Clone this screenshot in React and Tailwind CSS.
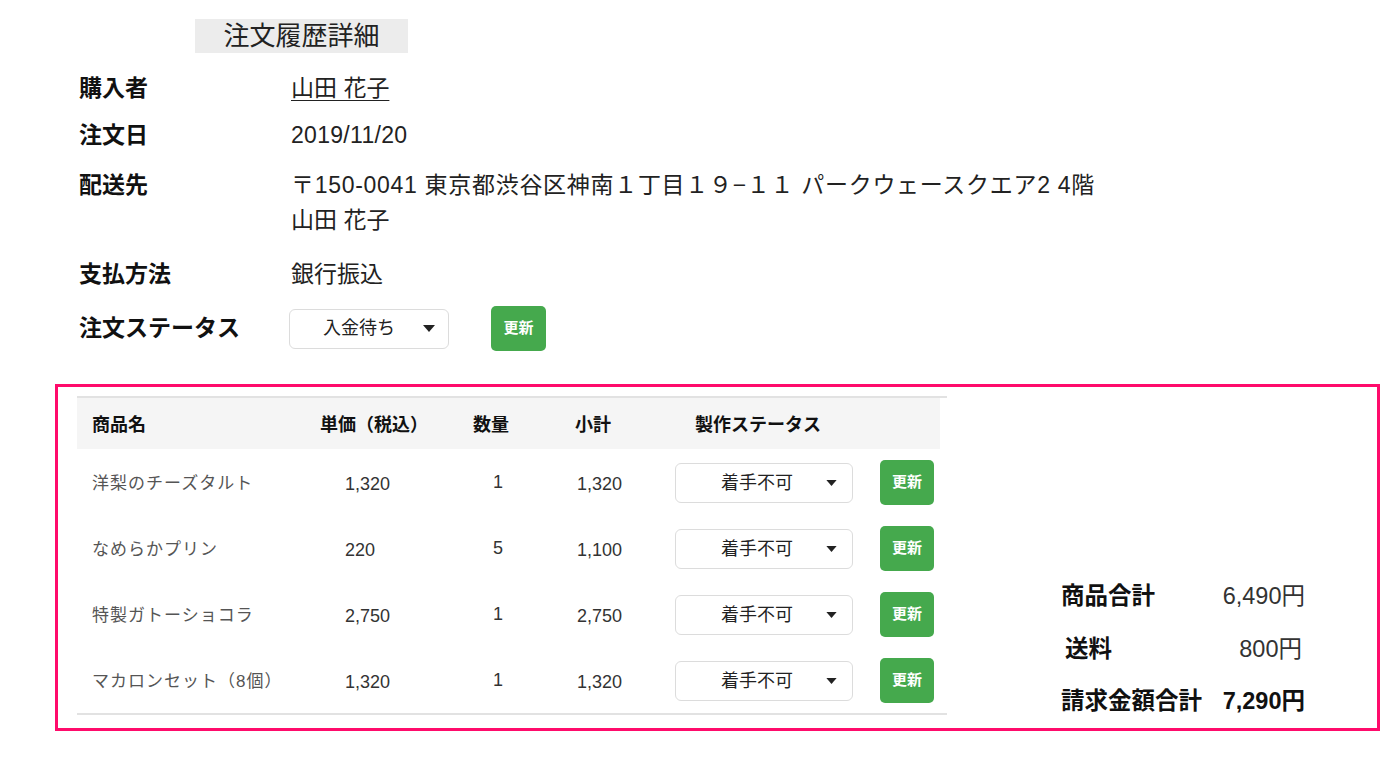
import React from 'react';

const items = [
  { name: '洋梨のチーズタルト', price: '1,320', qty: '1', subtotal: '1,320' },
  { name: 'なめらかプリン', price: '220', qty: '5', subtotal: '1,100' },
  { name: '特製ガトーショコラ', price: '2,750', qty: '1', subtotal: '2,750' },
  { name: 'マカロンセット（8個）', price: '1,320', qty: '1', subtotal: '1,320' },
];

const Caret = ({ className }) => (
  <svg viewBox="0 0 12 7" className={className} fill="#222">
    <path d="M0 0h12L6 7z" />
  </svg>
);

const UpdateButton = ({ className }) => (
  <button className={`flex items-center justify-center rounded-[5px] bg-[#45a94d] text-white font-bold ${className}`}>
    更新
  </button>
);

const StatusSelect = ({ label, className, textClass, caretClass }) => (
  <div className={`flex items-center justify-between rounded-[6px] border border-[#dcdcdc] bg-white ${className}`}>
    <span className={textClass}>{label}</span>
    <Caret className={caretClass} />
  </div>
);

const InfoRow = ({ label, children, className = '' }) => (
  <div className={`flex ${className}`}>
    <div className="w-[212px] shrink-0 font-bold text-[#111] leading-[35px]">{label}</div>
    <div className="leading-[35px] text-[#222]">{children}</div>
  </div>
);

const App = () => {
  return (
    <div
      className="min-h-screen w-[1400px] bg-white pt-[19px] text-[23px]"
      style={{ fontFamily: '"Liberation Sans", "Noto Sans CJK JP", sans-serif' }}
    >
      <div className="ml-[195px] h-[34px] w-[213px] bg-[#ececec] text-center text-[26px] leading-[34px] text-[#222]">
        注文履歴詳細
      </div>

      <div className="ml-[79px] flex flex-col">
        <InfoRow label="購入者" className="mt-[18px]">
          <span className="underline underline-offset-[4px] decoration-1">山田 花子</span>
        </InfoRow>
        <InfoRow label="注文日" className="mt-[12px]">
          <span className="tracking-[0.3px]">2019/11/20</span>
        </InfoRow>
        <InfoRow label="配送先" className="mt-[15px]">
          <div className="tracking-[0.7px]">〒150-0041 東京都渋谷区神南１丁目１９−１１ パークウェースクエア2 4階</div>
          <div>山田 花子</div>
        </InfoRow>
        <InfoRow label="支払方法" className="mt-[19px]">銀行振込</InfoRow>
        <div className="mt-[14px] flex h-[45px] items-center">
          <div className="w-[210px] shrink-0 font-bold text-[#111]">注文ステータス</div>
          <StatusSelect
            label="入金待ち"
            className="h-[40px] w-[160px] pl-[33px] pr-[13px]"
            textClass="text-[18px] text-[#222]"
            caretClass="w-[12px] h-[7px]"
          />
          <UpdateButton className="ml-[42px] h-[45px] w-[55px] text-[15px]" />
        </div>
      </div>

      <div className="ml-[55px] mr-[20px] mt-[33px] flex border-[3px] border-[#ff0b6b] pl-[19px] pt-[9px]">
        <div className="mb-[13px] w-[870px] border-b-2 border-t-2 border-[#e2e2e2]">
          <div className="mr-[7px] flex h-[51px] items-center bg-[#f5f5f5] pt-[3px] text-[18px] font-bold text-[#111]">
            <div className="w-[243px] pl-[15px]">商品名</div>
            <div className="w-[153px]">単価（税込）</div>
            <div className="w-[102px]">数量</div>
            <div className="w-[100px]">小計</div>
            <div className="w-[205px] pl-[20px]">製作ステータス</div>
          </div>
          {items.map((item) => (
            <div key={item.name} className="flex h-[66px] items-center">
              <div className="w-[243px] pl-[15px] pt-[4px] text-[17px] tracking-[1px] text-[#555]">{item.name}</div>
              <div className="w-[153px] pl-[25px] pt-[5px] text-[18px] text-[#333]">{item.price}</div>
              <div className="w-[102px] pl-[20px] text-[18px] text-[#333]">{item.qty}</div>
              <div className="w-[100px] pl-[2px] pt-[5px] text-[18px] text-[#333]">{item.subtotal}</div>
              <div className="w-[205px] pt-[2px]">
                <StatusSelect
                  label="着手不可"
                  className="h-[40px] w-[178px] pl-[45px] pr-[15px]"
                  textClass="text-[18px] text-[#222]"
                  caretClass="w-[11px] h-[6px]"
                />
              </div>
              <UpdateButton className="h-[45px] w-[54px] text-[15px]" />
            </div>
          ))}
        </div>

        <div className="ml-[114px] flex flex-col self-end text-[23.5px]">
          <div className="flex h-[52.5px] items-center">
            <div className="w-[161px] font-bold text-[#111]">商品合計</div>
            <div className="w-[83px] text-right text-[#333]">6,490円</div>
          </div>
          <div className="flex h-[52.5px] items-center">
            <div className="w-[161px] pl-[4px] font-bold text-[#111]">送料</div>
            <div className="w-[80px] text-right text-[#333]">800円</div>
          </div>
          <div className="flex h-[52.5px] items-center">
            <div className="w-[161px] font-bold text-[#111]">請求金額合計</div>
            <div className="w-[83px] text-right font-bold text-[#111]">7,290円</div>
          </div>
        </div>
      </div>
    </div>
  );
};

export default App;
